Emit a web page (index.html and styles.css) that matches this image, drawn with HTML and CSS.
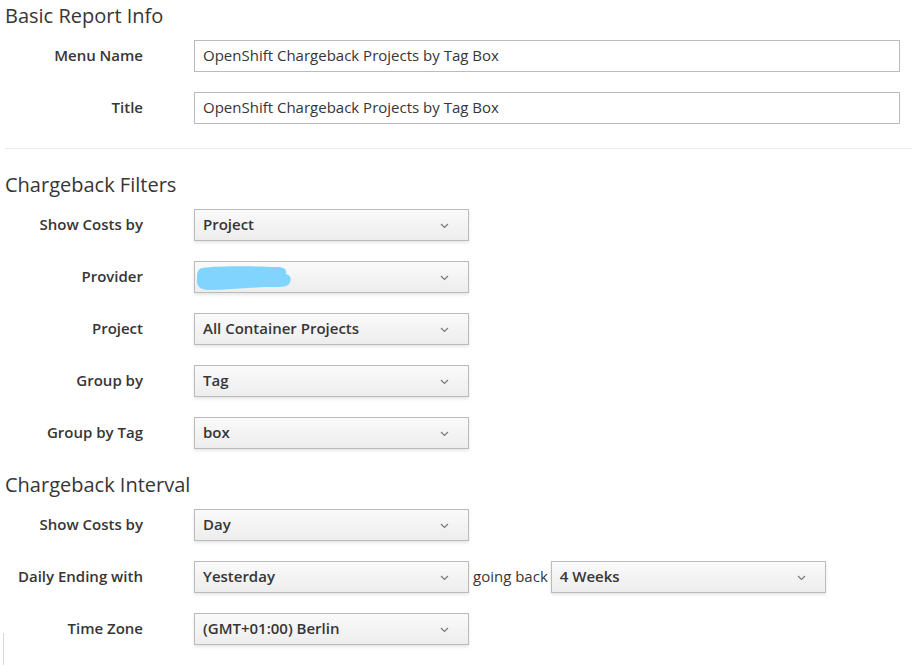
FILE: index.html
```html
<!DOCTYPE html>
<html>
<head>
<meta charset="utf-8">
<link rel="stylesheet" href="styles.css">
</head>
<body>
<div class="page">
  <h3 class="section-title">Basic Report Info</h3>
  <div class="form-row">
    <label class="form-label">Menu Name</label>
    <div class="text-input">OpenShift Chargeback Projects by Tag Box</div>
  </div>
  <div class="form-row">
    <label class="form-label">Title</label>
    <div class="text-input">OpenShift Chargeback Projects by Tag Box</div>
  </div>
  <hr class="divider">

  <h3 class="section-title">Chargeback Filters</h3>
  <div class="form-row">
    <label class="form-label">Show Costs by</label>
    <div class="select"><span class="select-text">Project</span><svg class="caret" width="9" height="6" viewBox="0 0 9 6"><path d="M1 1 L4.5 4.5 L8 1" fill="none" stroke="#777" stroke-width="1.1"/></svg></div>
  </div>
  <div class="form-row">
    <label class="form-label">Provider</label>
    <div class="select"><span class="select-text"><svg class="redact" width="96" height="27" viewBox="0 0 96 27"><path d="M6 3 C20 1 60 1 80 2 C88 2 91 4 90 9 C95 10 96 15 93 19 C90 23 80 22 70 22 C50 23 30 25 12 25 C4 25 0 21 1 13 C1 7 2 4 6 3 Z" fill="#80d4fd"/></svg></span><svg class="caret" width="9" height="6" viewBox="0 0 9 6"><path d="M1 1 L4.5 4.5 L8 1" fill="none" stroke="#777" stroke-width="1.1"/></svg></div>
  </div>
  <div class="form-row">
    <label class="form-label">Project</label>
    <div class="select"><span class="select-text">All Container Projects</span><svg class="caret" width="9" height="6" viewBox="0 0 9 6"><path d="M1 1 L4.5 4.5 L8 1" fill="none" stroke="#777" stroke-width="1.1"/></svg></div>
  </div>
  <div class="form-row">
    <label class="form-label">Group by</label>
    <div class="select"><span class="select-text">Tag</span><svg class="caret" width="9" height="6" viewBox="0 0 9 6"><path d="M1 1 L4.5 4.5 L8 1" fill="none" stroke="#777" stroke-width="1.1"/></svg></div>
  </div>
  <div class="form-row">
    <label class="form-label">Group by Tag</label>
    <div class="select"><span class="select-text">box</span><svg class="caret" width="9" height="6" viewBox="0 0 9 6"><path d="M1 1 L4.5 4.5 L8 1" fill="none" stroke="#777" stroke-width="1.1"/></svg></div>
  </div>

  <h3 class="section-title">Chargeback Interval</h3>
  <div class="form-row">
    <label class="form-label">Show Costs by</label>
    <div class="select"><span class="select-text">Day</span><svg class="caret" width="9" height="6" viewBox="0 0 9 6"><path d="M1 1 L4.5 4.5 L8 1" fill="none" stroke="#777" stroke-width="1.1"/></svg></div>
  </div>
  <div class="form-row">
    <label class="form-label">Daily Ending with</label>
    <div class="select"><span class="select-text">Yesterday</span><svg class="caret" width="9" height="6" viewBox="0 0 9 6"><path d="M1 1 L4.5 4.5 L8 1" fill="none" stroke="#777" stroke-width="1.1"/></svg></div>
    <span class="inline-text">going back</span>
    <div class="select"><span class="select-text">4 Weeks</span><svg class="caret" width="9" height="6" viewBox="0 0 9 6"><path d="M1 1 L4.5 4.5 L8 1" fill="none" stroke="#777" stroke-width="1.1"/></svg></div>
  </div>
  <div class="form-row">
    <label class="form-label">Time Zone</label>
    <div class="select"><span class="select-text">(GMT+01:00) Berlin</span><svg class="caret" width="9" height="6" viewBox="0 0 9 6"><path d="M1 1 L4.5 4.5 L8 1" fill="none" stroke="#777" stroke-width="1.1"/></svg></div>
  </div>
</div>
<div class="edge-mark"></div>
</body>
</html>
```

FILE: styles.css
```css
html, body {
  margin: 0;
  padding: 0;
  background: #ffffff;
}
body {
  font-family: "Open Sans", "Noto Sans", sans-serif;
  color: #363636;
  font-size: 15px;
  position: relative;
  height: 665px;
  overflow: hidden;
}
.page {
  display: flex;
  flex-direction: column;
  padding-left: 5px;
}
.section-title {
  font-size: 20px;
  font-weight: 400;
  line-height: 22px;
  margin: 5px 0 13px 0;
  color: #363636;
}
.form-row {
  display: flex;
  align-items: center;
  height: 32px;
  margin-bottom: 20px;
}
.form-label {
  width: 138px;
  text-align: right;
  font-weight: 600;
  margin-right: 51px;
  margin-top: -2px;
  color: #363636;
  white-space: nowrap;
}
.text-input {
  box-sizing: border-box;
  width: 706px;
  height: 32px;
  border: 1px solid #bbbbbb;
  padding: 0 8px;
  line-height: 28px;
  background: #fff;
  white-space: nowrap;
}
.select {
  box-sizing: border-box;
  width: 275px;
  height: 32px;
  border: 1px solid #bbbbbb;
  background: linear-gradient(to bottom, #fafafa 0%, #ededed 100%);
  box-shadow: 0 2px 3px rgba(3, 3, 3, 0.1);
  display: flex;
  align-items: center;
  justify-content: space-between;
  padding: 0 19px 0 8px;
  font-weight: 600;
}
.select-text {
  display: flex;
  align-items: center;
  line-height: 30px;
  margin-top: -2px;
}
.redact {
  display: block;
  margin-left: -7px;
  margin-top: 4px;
}
.caret {
  display: block;
  margin-top: 2px;
}
.inline-text {
  margin: -3px 3px 0 4px;
  white-space: nowrap;
}
.divider {
  border: 0;
  border-top: 1px solid #ececec;
  margin: 4px 0 20px 0;
  width: 100%;
}
.edge-mark {
  position: absolute;
  left: 3px;
  top: 633px;
  width: 1px;
  height: 32px;
  background: #d8d8d8;
}
```
